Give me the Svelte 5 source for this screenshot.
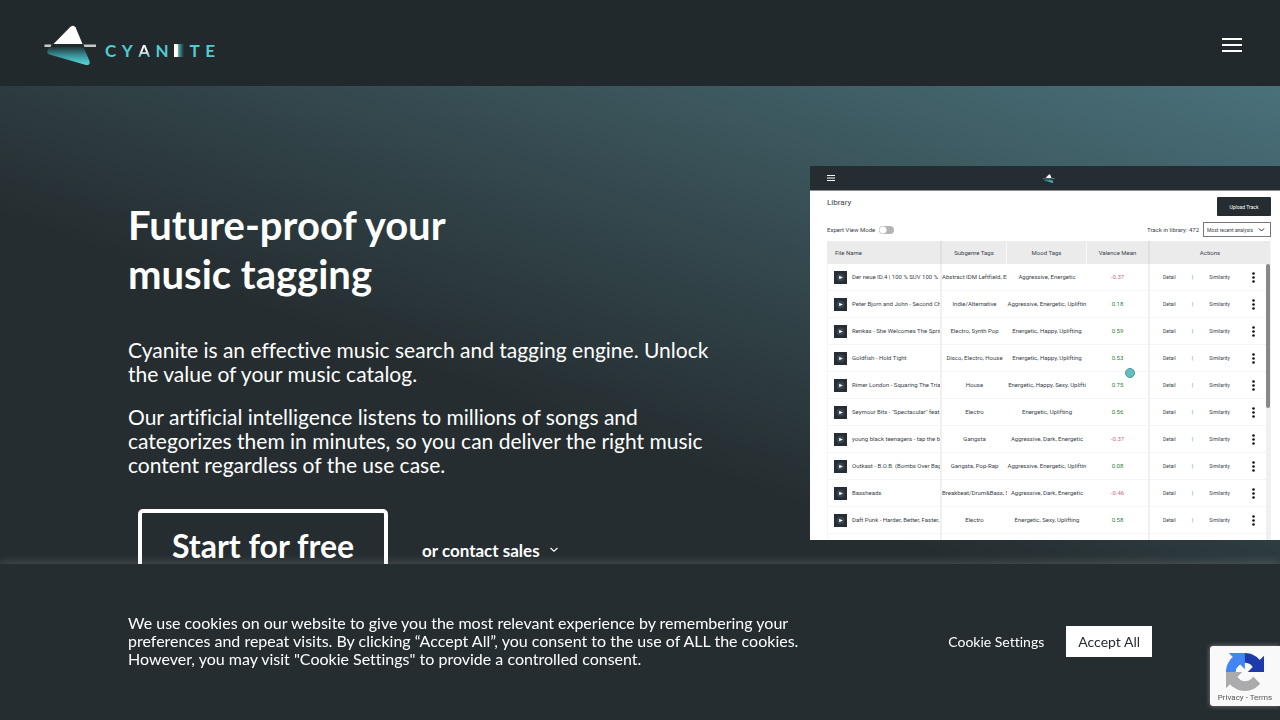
<script lang="ts">
  type Track = { name: string; subgenre: string; mood: string; valence: string };

  const tracks: Track[] = [
    { name: 'Der neue ID.4 | 100 % SUV 100 %', subgenre: 'Abstract IDM Leftfield, El', mood: 'Aggressive, Energetic', valence: '-0.37' },
    { name: 'Peter Bjorn and John - Second Ch', subgenre: 'Indie/Alternative', mood: 'Aggressive, Energetic, Upliftin', valence: '0.18' },
    { name: 'Renkas - She Welcomes The Sprin', subgenre: 'Electro, Synth Pop', mood: 'Energetic, Happy, Uplifting', valence: '0.59' },
    { name: 'Goldfish - Hold Tight', subgenre: 'Disco, Electro, House', mood: 'Energetic, Happy, Uplifting', valence: '0.53' },
    { name: 'Rimer London - Squaring The Tria', subgenre: 'House', mood: 'Energetic, Happy, Sexy, Uplifti', valence: '0.75' },
    { name: 'Seymour Bits - "Spectacular" feat.', subgenre: 'Electro', mood: 'Energetic, Uplifting', valence: '0.56' },
    { name: 'young black teenagers - tap the bo', subgenre: 'Gangsta', mood: 'Aggressive, Dark, Energetic', valence: '-0.37' },
    { name: 'Outkast - B.O.B. (Bombs Over Bag', subgenre: 'Gangsta, Pop-Rap', mood: 'Aggressive, Energetic, Upliftin', valence: '0.08' },
    { name: 'Bassheads', subgenre: 'Breakbeat/Drum&Bass, S', mood: 'Aggressive, Dark, Energetic', valence: '-0.46' },
    { name: 'Daft Punk - Harder, Better, Faster,', subgenre: 'Electro', mood: 'Energetic, Sexy, Uplifting', valence: '0.58' },
    { name: '', subgenre: '', mood: '', valence: '' }
  ];
</script>

{#snippet mark(id: string)}
  <svg class="mark" viewBox="0 0 53 41" aria-hidden="true">
    <defs>
      <linearGradient id={id} x1="0" y1="0" x2="0" y2="1">
        <stop offset="0" stop-color="#22373b" />
        <stop offset="0.5" stop-color="#3a979d" />
        <stop offset="1" stop-color="#5adbe1" />
      </linearGradient>
    </defs>
    <path d="M9.500 19 L26.500 1.800 Q29.500 -0.600 31.500 2.200 L38.500 19 Z" fill="#fff" />
    <path d="M0.500 19.500 H7.500 L6.500 22 H0.500 Z M39.500 19.500 H52 V22 H40.500 Z" fill="#c6c8c9" />
    <path d="M6 22 H39.500 L45.500 36 Q46.500 40.800 42 40 L5.500 29.500 Q1.500 27.500 4.500 23.500 Z" fill="url(#{id})" />
  </svg>
{/snippet}

<div class="page">
  <header class="site-header">
    <a class="logo" href="/" aria-label="Cyanite">
      {@render mark('mark-header')}
      <span class="wordmark">
        <span>C</span><span>Y</span><span class="wm-a">A</span><span>N</span><span class="wm-i">I</span><span>T</span><span>E</span>
      </span>
    </a>
    <button class="burger" aria-label="Menu"><i></i><i></i><i></i></button>
  </header>

  <main class="hero">
    <section class="copy">
      <h1>Future-proof your<br />music tagging</h1>
      <p>Cyanite is an effective music search and tagging engine. Unlock the value of your music catalog.</p>
      <p>Our artificial intelligence listens to millions of songs and categorizes them in minutes, so you can deliver the right music content regardless of the use case.</p>
      <div class="actions">
        <a class="start" href="#start">Start for free</a>
        <a class="sales" href="#sales">
          or contact sales
          <svg width="10" height="6" viewBox="0 0 10 6" fill="none" stroke="currentColor" stroke-width="1.2" aria-hidden="true">
            <path d="M1.500 1 L5 4.300 L8.500 1" />
          </svg>
        </a>
      </div>
    </section>

    <section class="preview" aria-label="Library preview">
      <div class="bar">
        <svg width="8" height="6" viewBox="0 0 8 6" aria-hidden="true">
          <path d="M0 0.500 H8 M0 3 H8 M0 5.500 H8" stroke="#fff" />
        </svg>
        {@render mark('mark-preview')}
      </div>

      <div class="library">
        <div class="lib-top">
          <h2>Library</h2>
          <button class="upload">Upload Track</button>
        </div>
        <div class="lib-tools">
          <label class="expert">Expert View Mode <input type="checkbox" /></label>
          <label class="count" for="sort">Track in library: 472</label>
          <span class="sort">
            <select id="sort"><option>Most recent analysis</option></select>
            <svg width="7" height="4" viewBox="0 0 7 4" fill="none" stroke="#222" aria-hidden="true"><path d="M1 0.500 L3.500 3 L6 0.500" /></svg>
          </span>
        </div>

        <div class="table-wrap">
          <table>
            <colgroup>
              <col class="c-name" /><col class="c-sub" /><col class="c-mood" /><col class="c-val" /><col />
            </colgroup>
            <thead>
              <tr>
                <th class="name">File Name</th><th>Subgenre Tags</th><th>Mood Tags</th><th class="val">Valence Mean</th><th>Actions</th>
              </tr>
            </thead>
            <tbody>
              {#each tracks as track}
                <tr>
                  <td class="name">
                    {#if track.name}
                      <div class="file">
                        <button class="play" aria-label="Play">
                          <svg width="13" height="13" viewBox="0 0 13 13" aria-hidden="true">
                            <circle cx="6.500" cy="6.500" r="4" fill="#38434b" />
                            <path d="M5.200 4.800 L8.800 6.500 L5.200 8.200 Z" fill="#fff" />
                          </svg>
                        </button>
                        <span>{track.name}</span>
                      </div>
                    {/if}
                  </td>
                  <td>{track.subgenre}</td>
                  <td>{track.mood}</td>
                  <td class="val" class:neg={track.valence.startsWith('-')}>{track.valence}</td>
                  <td>
                    {#if track.name}
                      <div class="links">
                        <a href="#detail">Detail</a><span class="sep">|</span><a href="#similarity">Similarity</a>
                        <svg width="3" height="11" viewBox="0 0 3 11" fill="#111" aria-hidden="true">
                          <circle cx="1.500" cy="1.500" r="1.300" />
                          <circle cx="1.500" cy="5.500" r="1.300" />
                          <circle cx="1.500" cy="9.500" r="1.300" />
                        </svg>
                      </div>
                    {/if}
                  </td>
                </tr>
              {/each}
            </tbody>
          </table>
          <div class="scroll"><div class="thumb"></div></div>
        </div>
      </div>
      <span class="cursor"></span>
    </section>
  </main>

  <aside class="cookies">
    <p>We use cookies on our website to give you the most relevant experience by remembering your preferences and repeat visits. By clicking “Accept All”, you consent to the use of ALL the cookies. However, you may visit "Cookie Settings" to provide a controlled consent.</p>
    <div class="cookie-actions">
      <button class="settings">Cookie Settings</button>
      <button class="accept">Accept All</button>
    </div>
  </aside>

  <aside class="captcha">
    <svg width="38" height="38" viewBox="0 0 64 64" aria-hidden="true">
      <path fill="#1c3aa9" d="M64 31.955a33 33 0 0 0-.026-1.370V4.687l-7.160 7.160C50.948 4.674 42.033.093 32.050.093c-10.400 0-19.622 4.960-25.458 12.640l11.736 11.860a15.550 15.550 0 0 1 4.754-5.334c2.050-1.600 4.952-2.906 8.968-2.906.485 0 .860.057 1.135.163 4.976.393 9.288 3.140 11.828 7.124l-8.307 8.307L64 31.953" />
      <path fill="#4285f4" d="M31.862.094a34 34 0 0 0-1.370.028H4.594l7.160 7.160C4.580 13.147 0 22.060 0 32.046c0 10.400 4.960 19.622 12.640 25.458L24.500 45.768a15.550 15.550 0 0 1-5.334-4.754c-1.600-2.050-2.906-4.952-2.906-8.968 0-.485.057-.860.163-1.135.393-4.976 3.140-9.288 7.124-11.828l8.307 8.307L31.860.095" />
      <path fill="#ababab" d="M.001 32.045a33 33 0 0 0 .026 1.370v25.898l7.160-7.160c5.866 7.173 14.780 11.754 24.764 11.754 10.400 0 19.622-4.960 25.458-12.640l-11.736-11.860a15.550 15.550 0 0 1-4.754 5.334c-2.050 1.600-4.952 2.906-8.968 2.906-.485 0-.860-.057-1.135-.163-4.976-.393-9.288-3.140-11.828-7.124l8.307-8.307L0 32.045" />
    </svg>
    <span><a href="#privacy">Privacy</a> - <a href="#terms">Terms</a></span>
  </aside>
</div>

<style>
  :global(body) {
    margin: 0;
    background: #252d30;
  }

  .page {
    font-family: Lato, "Liberation Sans", sans-serif;
    font-variant-ligatures: none;
    color: #fff;
  }

  a {
    color: inherit;
    text-decoration: none;
  }

  button {
    border: 0;
    padding: 0;
    font-family: inherit;
    font-variant-ligatures: inherit;
    color: inherit;
    background: none;
    cursor: pointer;
  }

  /* Header */
  .site-header {
    display: flex;
    align-items: center;
    justify-content: space-between;
    height: 86px;
    padding: 0 38px 0 44px;
    box-sizing: border-box;
    background: #22292c;
  }

  .logo {
    display: flex;
    align-items: center;
    gap: 8px;
    padding-top: 4px;
  }

  .logo .mark {
    width: 53px;
    height: 41px;
  }

  .wordmark {
    display: flex;
    justify-content: space-between;
    width: 110px;
    padding-top: 10px;
    font-size: 17px;
    line-height: 13px;
    font-weight: 700;
    color: #51cbd1;
  }

  .wm-a {
    color: transparent;
    background: linear-gradient(#fff 55%, #3fb3b9);
    background-clip: text;
  }

  .wm-i {
    padding-right: 5px;
    color: #fff;
    background: linear-gradient(90deg, #fff 25%, #4aa9ae 45%, #22292c);
  }

  .burger {
    display: flex;
    flex-direction: column;
    gap: 4px;
    padding-top: 4px;
  }

  .burger i {
    width: 20px;
    height: 2px;
    background: #fff;
  }

  /* Hero */
  .hero {
    display: grid;
    grid-template-columns: 682fr 470fr;
    align-items: start;
    box-sizing: border-box;
    min-height: calc(100vh - 86px);
    padding: 80px 0 50px 10%;
    background: linear-gradient(20deg, #252d30 46%, #4a717a 100%);
  }

  .copy {
    padding: 35px 80px 0 0;
  }

  h1 {
    margin: 0 0 39px;
    font-size: 40px;
    line-height: 49px;
    font-weight: 700;
  }

  .copy p {
    margin: 0 0 19px;
    font-size: 21px;
    line-height: 24px;
  }

  .actions {
    display: flex;
    align-items: center;
    gap: 34px;
    padding: 13px 0 0 10px;
  }

  .start {
    box-sizing: border-box;
    width: 250px;
    border: 4px solid #fff;
    border-radius: 5px;
    font-size: 32px;
    line-height: 66px;
    font-weight: 700;
    text-align: center;
  }

  .sales {
    display: flex;
    align-items: center;
    gap: 9px;
    padding-top: 8px;
    font-size: 17px;
    font-weight: 700;
  }

  /* Library preview */
  .preview {
    position: relative;
    display: flex;
    flex-direction: column;
    aspect-ratio: 470 / 374;
    min-height: 0;
    overflow: hidden;
    background: #fff;
    color: #39424a;
    font-family: Roboto, "Liberation Sans", sans-serif;
    font-size: 6px;
    line-height: 8px;
  }

  .bar {
    display: flex;
    flex: none;
    align-items: center;
    height: 24px;
    padding: 0 17px;
    background: #252d32;
    border-bottom: 1px solid #8b8f91;
  }

  .bar .mark {
    width: 12px;
    height: 9px;
    margin: 0 auto;
  }

  .library {
    padding: 6px 9px 0 17px;
  }

  .lib-top {
    display: flex;
    justify-content: space-between;
  }

  h2 {
    margin: 0;
    font-size: 8px;
    line-height: 12px;
    font-weight: 400;
  }

  .upload {
    width: 54px;
    height: 19px;
    font-size: 5px;
    background: #252d32;
    color: #fff;
    border-radius: 1px;
  }

  .lib-tools {
    display: flex;
    align-items: center;
    gap: 4px;
    padding: 6px 0 4px;
  }

  .expert {
    display: flex;
    align-items: center;
    gap: 4px;
    margin-right: auto;
  }

  .expert input {
    appearance: none;
    width: 15px;
    height: 8px;
    margin: 0;
    border-radius: 4px;
    background: radial-gradient(circle at 4px 4px, #fff 3px, #b5b5b5 4px);
  }

  .sort {
    display: flex;
    align-items: center;
    box-sizing: border-box;
    width: 68px;
    height: 15px;
    padding: 0 5px 0 3px;
    border: 1px solid #777;
  }

  .sort select {
    appearance: none;
    flex: 1;
    min-width: 0;
    padding: 0;
    border: 0;
    background: none;
    color: inherit;
    font-family: inherit;
    font-size: 5px;
  }

  .table-wrap {
    position: relative;
  }

  table {
    width: 100%;
    table-layout: fixed;
    border-collapse: separate;
    border-spacing: 0;
  }

  .c-name { width: 115px; }
  .c-sub { width: 65px; }
  .c-mood { width: 80px; }
  .c-val { width: 63px; }

  th,
  td {
    box-sizing: border-box;
    padding: 0;
    overflow: hidden;
    white-space: nowrap;
    text-align: center;
    font-weight: 400;
  }

  th {
    height: 23px;
    background: #ebebeb;
    border-right: 1px solid #f6f6f6;
  }

  td {
    height: 27px;
    border-bottom: 1px solid #f5f5f5;
  }

  th.name {
    padding-left: 8px;
    text-align: left;
  }

  td.name {
    padding: 0 0 0 6px;
    border-left: 1px solid #f5f5f5;
  }

  .name,
  .val {
    border-right: 2px solid #f0f0f0;
  }

  th.name,
  th.val {
    border-right-color: #e0e0e0;
  }

  td.val {
    color: #2f7d3b;
  }

  td.neg {
    color: #c56a86;
  }

  .file {
    display: flex;
    align-items: center;
    gap: 5px;
  }

  .play {
    flex: none;
    width: 13px;
    height: 13px;
    background: #252d35;
  }

  .play svg {
    display: block;
  }

  .links {
    display: flex;
    align-items: center;
    justify-content: space-between;
    padding: 0 16px 0 13px;
    font-size: 5px;
  }

  .links svg {
    margin-left: 6px;
  }

  .sep {
    color: #2f7d5b;
  }

  .scroll {
    position: absolute;
    top: 23px;
    right: 0;
    bottom: 0;
    width: 5px;
    background: #f0f0f0;
  }

  .thumb {
    width: 4px;
    height: 144px;
    border-radius: 2px;
    background: #888;
  }

  .cursor {
    position: absolute;
    left: 67%;
    top: 54%;
    box-sizing: border-box;
    width: 10px;
    height: 10px;
    border: 1px solid #3f9da1;
    border-radius: 50%;
    background: #68bcc0;
  }

  /* Cookie bar */
  .cookies {
    position: fixed;
    right: 0;
    bottom: 0;
    left: 0;
    display: flex;
    align-items: center;
    justify-content: space-between;
    box-sizing: border-box;
    min-height: 156px;
    padding: 0 10% 2px;
    background: #252d30;
    box-shadow: 0 -1px 10px rgba(172, 171, 171, 0.3);
  }

  .cookies p {
    flex: 0 1 690px;
    margin: 0;
    font-size: 16px;
    line-height: 18px;
  }

  .cookie-actions {
    display: flex;
    align-items: center;
    gap: 22px;
  }

  .cookie-actions button {
    font-size: 14px;
    line-height: 31px;
  }

  .cookie-actions .accept {
    padding: 0 12px;
    background: #fff;
    color: #252d30;
  }

  .captcha {
    position: fixed;
    right: 0;
    bottom: 14px;
    display: flex;
    flex-direction: column;
    align-items: center;
    box-sizing: border-box;
    width: 70px;
    height: 60px;
    padding-top: 7px;
    border-radius: 3px 0 0 3px;
    background: #f9f9f9;
    box-shadow: 0 0 5px #808080;
    color: #555;
    font-family: Roboto, sans-serif;
    font-size: 8px;
    line-height: 13px;
    white-space: nowrap;
  }
</style>
